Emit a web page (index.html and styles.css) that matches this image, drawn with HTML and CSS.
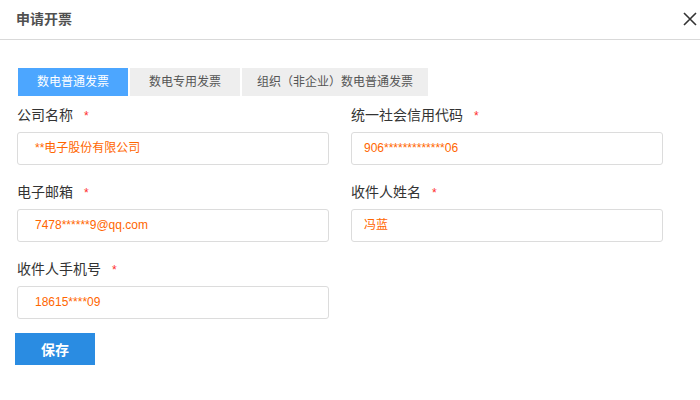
FILE: index.html
```html
<!DOCTYPE html>
<html lang="zh-CN">
<head>
<meta charset="utf-8">
<title>申请开票</title>
<link rel="stylesheet" href="styles.css">
</head>
<body>
<div class="dialog">
  <div class="header">
    <div class="title">申请开票</div>
    <button class="close" aria-label="关闭">
      <svg width="14" height="14" viewBox="0 0 14 14"><path d="M1 1L13 13M13 1L1 13" stroke="#333" stroke-width="1.6" fill="none"/></svg>
    </button>
  </div>
  <div class="body">
    <div class="tabs">
      <div class="tab active">数电普通发票</div>
      <div class="tab">数电专用发票</div>
      <div class="tab">组织（非企业）数电普通发票</div>
    </div>
    <div class="form">
      <div class="field left">
        <div class="label">公司名称<span class="req">*</span></div>
        <div class="input">**电子股份有限公司</div>
      </div>
      <div class="field right">
        <div class="label">统一社会信用代码<span class="req">*</span></div>
        <div class="input">906*************06</div>
      </div>
      <div class="field left">
        <div class="label">电子邮箱<span class="req">*</span></div>
        <div class="input">7478******9@qq.com</div>
      </div>
      <div class="field right">
        <div class="label">收件人姓名<span class="req">*</span></div>
        <div class="input">冯蓝</div>
      </div>
      <div class="field left">
        <div class="label">收件人手机号<span class="req">*</span></div>
        <div class="input">18615****09</div>
      </div>
    </div>
    <button class="save">保存</button>
  </div>
</div>
</body>
</html>
```

FILE: styles.css
```css
* { box-sizing: border-box; }
html, body {
  margin: 0;
  padding: 0;
  background: #fff;
  font-family: "Liberation Sans", "Noto Sans CJK SC", sans-serif;
}
.dialog {
  width: 700px;
  height: 400px;
  background: #fff;
}
.header {
  height: 40px;
  border-bottom: 1px solid #d9d9d9;
  display: flex;
  align-items: center;
  justify-content: space-between;
  padding: 0 3px 1px 16px;
}
.title {
  font-size: 14px;
  font-weight: bold;
  color: #505050;
  line-height: 20px;
}
.close {
  border: 0;
  background: transparent;
  padding: 0;
  width: 14px;
  height: 14px;
  display: flex;
  cursor: pointer;
}
.body {
  padding: 28px 0 0 17px;
}
.tabs {
  display: flex;
  gap: 2px;
  margin-left: 1px;
}
.tab {
  min-width: 110px;
  height: 28px;
  line-height: 28px;
  padding: 0 15px;
  text-align: center;
  font-size: 12px;
  color: #555;
  background: #eeeeee;
}
.tab.active {
  background: #4ca6ff;
  color: #fff;
}
.form {
  display: grid;
  grid-template-columns: 312px 312px;
  column-gap: 22px;
  row-gap: 17px;
  margin-top: 9px;
}
.label {
  height: 20px;
  font-size: 14px;
  line-height: 20px;
  color: #333;
  margin-bottom: 7px;
  overflow: hidden;
}
.req {
  color: #ff2d2d;
  font-size: 12px;
  line-height: 12px;
  margin-left: 11px;
}
.input {
  height: 33px;
  border: 1px solid #dcdcdc;
  border-radius: 3px;
  font-size: 12px;
  line-height: 31px;
  color: #ff6600;
  padding-left: 17px;
}
.field.right .input {
  padding-left: 12px;
}
.save {
  display: block;
  margin: 14px 0 0 -2px;
  width: 80px;
  height: 32px;
  border: 0;
  border-radius: 0;
  background: #2a8ce2;
  color: #fff;
  font-family: "Liberation Sans", "Noto Sans CJK SC", sans-serif;
  font-size: 14px;
  font-weight: bold;
  padding: 0;
  cursor: pointer;
}
```
